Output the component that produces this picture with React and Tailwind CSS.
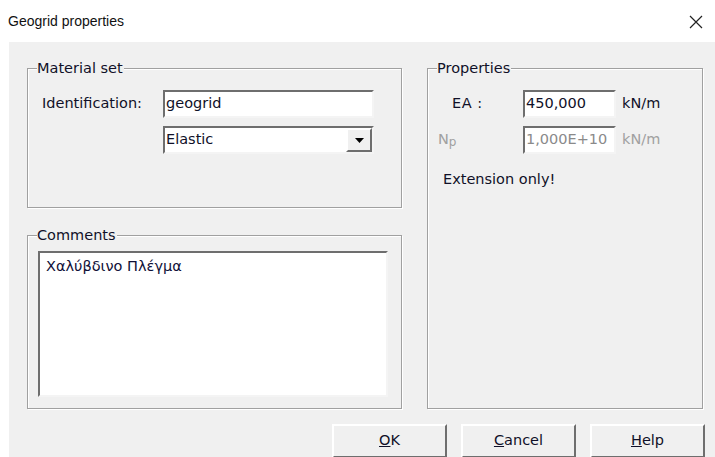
import React from "react";

const ui = { fontFamily: '"DejaVu Sans", Tahoma, sans-serif' };

function GroupBox({ title, className = "", children }) {
  return (
    <div
      className={`relative border border-[#a0a0a0] shadow-[inset_1px_1px_0_#ffffff,1px_1px_0_#ffffff] ${className}`}
    >
      <span className="absolute left-[9px] top-[-10px] bg-[#f0f0f0] pr-[1px] text-[14.5px] leading-[18px] text-[#101028]">
        {title}
      </span>
      {children}
    </div>
  );
}

function Sunken({ className = "", children }) {
  return (
    <div
      className={`flex items-center border-2 border-t-[#6e6e6e] border-l-[#6e6e6e] border-b-[#f4f4f4] border-r-[#f4f4f4] bg-white pl-[1px] text-[14.5px] ${className}`}
    >
      {children}
    </div>
  );
}

function Button({ children }) {
  return (
    <div className="flex h-[34px] w-[115px] items-center justify-center border-2 border-t-[#ffffff] border-l-[#ffffff] border-b-[#6e6e6e] border-r-[#6e6e6e] bg-[#f0f0f0] text-[14.5px] text-[#101028]">
      {children}
    </div>
  );
}

export default function App() {
  return (
    <div className="flex h-[457px] w-[715px] flex-col overflow-hidden bg-white" style={ui}>
      {/* title bar */}
      <div className="flex h-[42px] shrink-0 items-center justify-between pl-[8px] pr-[12px]">
        <span className="text-[14px] text-[#111]" style={{ fontFamily: '"Liberation Sans", Arial, sans-serif' }}>
          Geogrid properties
        </span>
        <svg width="14" height="14" viewBox="0 0 14 14" className="mt-[2px]">
          <path d="M1 1 L13 13 M13 1 L1 13" stroke="#222" strokeWidth="1.2" fill="none" />
        </svg>
      </div>

      {/* dialog body */}
      <div className="ml-[9px] flex flex-1 flex-col bg-[#f0f0f0] pl-[18px] pt-[26px]">
        <div className="flex gap-[25px]">
          <div className="flex w-[375px] flex-col gap-[27px]">
            <GroupBox title="Material set" className="h-[140px]">
              <div className="flex items-center pt-[21px]">
                <span className="w-[135px] pl-[14px] text-[14.5px] text-[#101028]">Identification:</span>
                <Sunken className="h-[28px] w-[211px] text-[#101028]">geogrid</Sunken>
              </div>
              <div className="flex pl-[135px] pt-[8px]">
                <Sunken className="h-[28px] w-[211px] justify-between text-[#101028]">
                  <span>Elastic</span>
                  <div className="flex h-full w-[26px] items-center justify-center border-2 border-t-[#ffffff] border-l-[#ffffff] border-b-[#6e6e6e] border-r-[#6e6e6e] bg-[#f0f0f0]">
                    <svg width="9" height="5" viewBox="0 0 9 5">
                      <path d="M0 0 H9 L4.5 5 Z" fill="#000" />
                    </svg>
                  </div>
                </Sunken>
              </div>
            </GroupBox>
            <GroupBox title="Comments" className="h-[174px]">
              <div className="px-[10px] pt-[15px]">
                <div className="h-[146px] w-[350px] border-2 border-t-[#6e6e6e] border-l-[#6e6e6e] border-b-[#f4f4f4] border-r-[#f4f4f4] bg-white px-[6px] pt-[3px] text-[14.5px] text-[#101038]">
                  Χαλύβδινο Πλέγμα
                </div>
              </div>
            </GroupBox>
          </div>

          <GroupBox title="Properties" className="h-[341px] w-[276px]">
            <div className="flex items-center pt-[21px]">
              <span className="w-[95px] pl-[24px] text-[14.5px] tracking-[0.5px] text-[#101028]">EA :</span>
              <Sunken className="h-[28px] w-[93px] text-[#101028]">450,000</Sunken>
              <span className="pl-[6px] text-[14.5px] text-[#101028]">kN/m</span>
            </div>
            <div className="flex items-center pt-[8px]">
              <span className="w-[95px] pl-[10px] text-[14.5px] text-[#a0a0a0]">
                N<sub className="relative top-[2px] text-[12px]">p</sub>
              </span>
              <Sunken className="h-[28px] w-[93px] text-[13.5px] text-[#8a8a8a]">1,000E+10</Sunken>
              <span className="pl-[6px] text-[14.5px] text-[#a0a0a0]">kN/m</span>
            </div>
            <div className="pl-[15px] pt-[15px] text-[14.5px] text-[#101028]">Extension only!</div>
          </GroupBox>
        </div>

        {/* action buttons */}
        <div className="flex gap-[14px] pl-[305px] pt-[15px]">
          <Button>
            <span><u>O</u>K</span>
          </Button>
          <Button>
            <span><u>C</u>ancel</span>
          </Button>
          <Button>
            <span><u>H</u>elp</span>
          </Button>
        </div>
      </div>
    </div>
  );
}
